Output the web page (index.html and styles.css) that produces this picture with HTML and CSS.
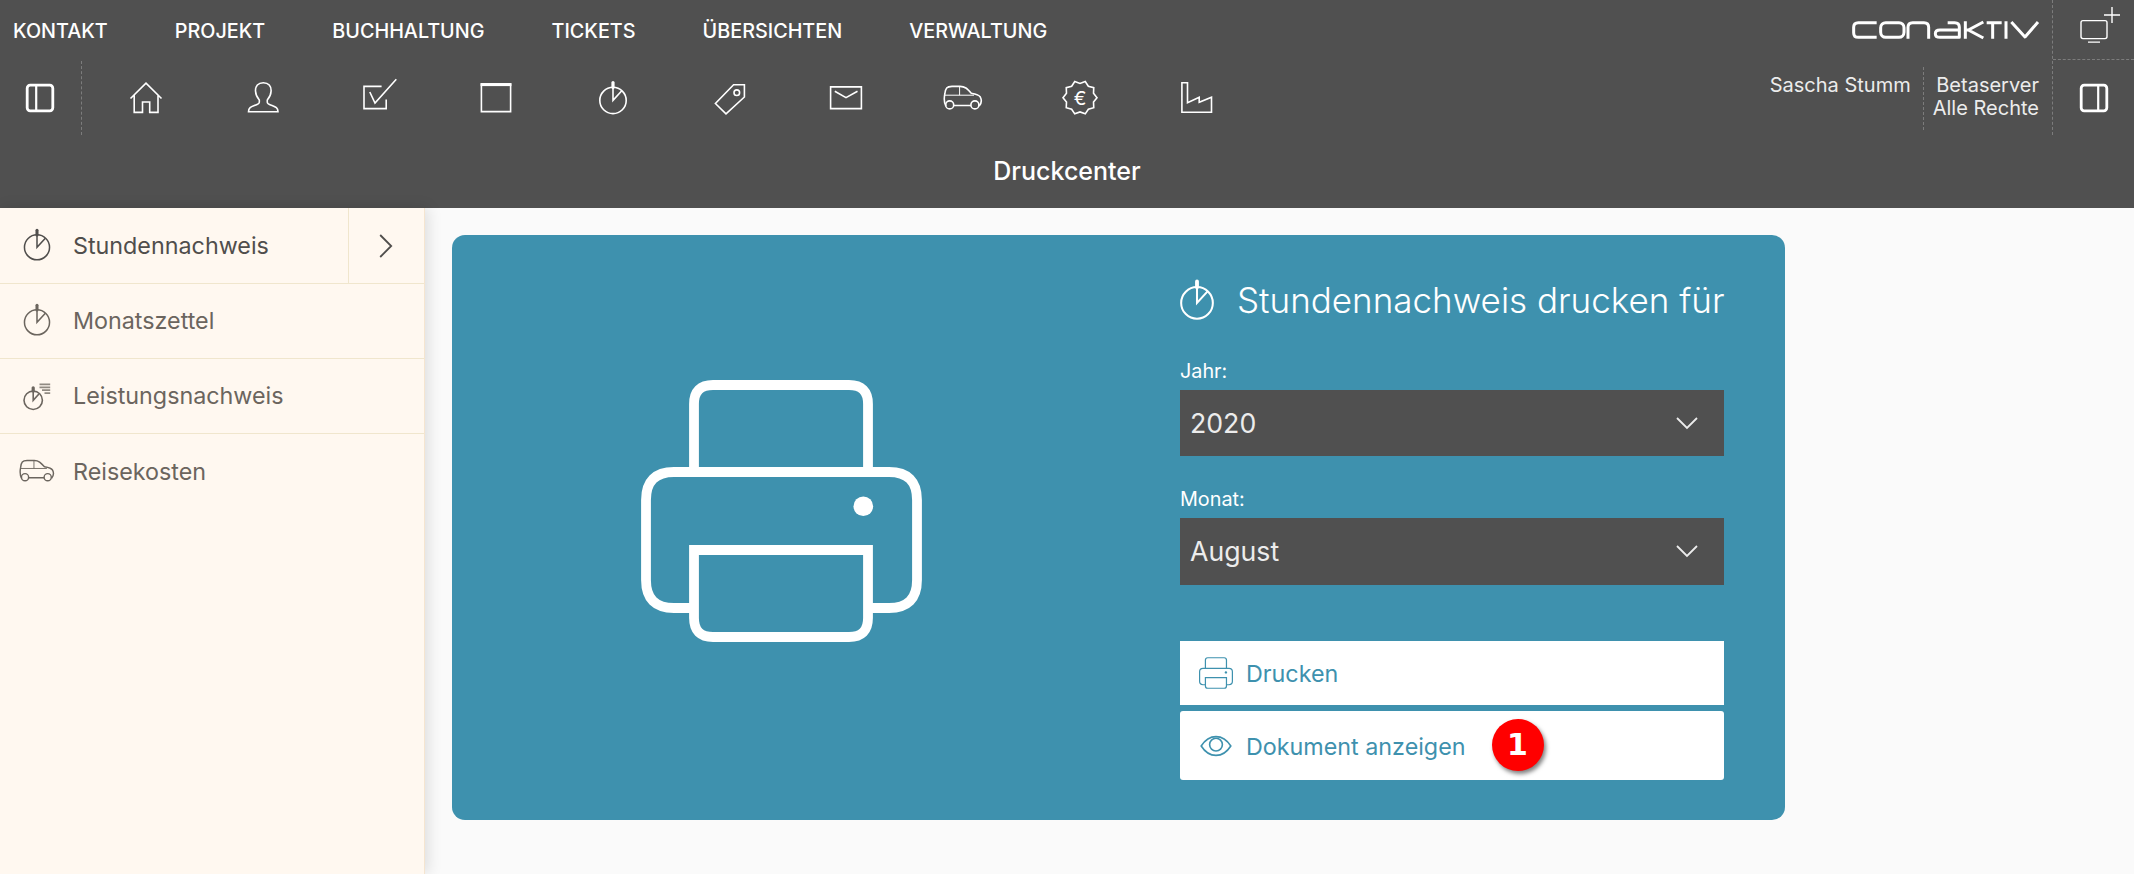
FILE: index.html
```html
<!DOCTYPE html>
<html lang="de">
<head>
<meta charset="utf-8">
<title>Druckcenter</title>
<link rel="stylesheet" href="styles.css">
</head>
<body>
<svg class="defs" aria-hidden="true">
  <symbol id="stopwatch" viewBox="0 0 40 40">
    <circle cx="20" cy="22.4" r="13.2"/>
    <path d="M20 9V22.4L28.8 12.8"/>
    <path class="knob" d="M20 4.6V9.4"/>
  </symbol>
  <symbol id="car" viewBox="0 0 40 40">
    <path d="M2.9 28C1.2 25 1 20 1.8 16C2.6 10 3.6 8.6 9 8.4H17C22 8.4 24 10.5 28.3 15.2C33 16 36 16.6 37.3 19C38.8 22 38.8 25 36.2 28M10.6 27.5H27.9"/>
    <path class="thin" d="M2 17.2H31M16.6 8.5V17.2"/>
    <circle cx="6.7" cy="26.9" r="4"/><circle cx="31.9" cy="26.9" r="4"/>
  </symbol>
  <symbol id="printer" viewBox="0 0 281 262">
    <path d="M53 92V24Q53 5 72 5H208Q227 5 227 24V92"/>
    <path d="M53 228H33Q5 228 5 200V120Q5 92 33 92H248Q276 92 276 120V200Q276 228 248 228H227"/>
    <path d="M53 170H227V238Q227 257 208 257H72Q53 257 53 238Z"/>
    <circle class="lamp" cx="222.3" cy="126.3" r="9.8"/>
  </symbol>
</svg>

<header class="header">
  <div class="header-main">
    <nav class="menu">
      <a>KONTAKT</a><a>PROJEKT</a><a>BUCHHALTUNG</a><a>TICKETS</a><a>ÜBERSICHTEN</a><a>VERWALTUNG</a>
    </nav>
    <div class="toolbar">
      <div class="panel-toggle">
        <svg class="icon bold" viewBox="0 0 40 40"><rect x="7.2" y="7.2" width="25.6" height="25.6" rx="3"/><path class="mid" d="M16.2 7V33"/></svg>
      </div>
      <div class="tools">
        <div class="tool"><svg class="icon" viewBox="0 0 40 40"><path d="M4.5 20.5L20 5.2L35.5 20.5M8.2 17V34.4H16.5V24H23.7V34.4H32V17"/></svg></div>
        <div class="tool"><svg class="icon" viewBox="0 0 40 40"><path d="M20.3 4.7C15 4.7 12.3 8 12.5 13C12.7 17.5 14.5 20 16.3 22C16.5 25 16.3 25.5 14 26.5C9 28.7 5.5 29 5.5 33.7H35C35 29 31.6 28.7 26.5 26.5C24.3 25.5 24.1 25 24.3 22C26.1 20 27.9 17.5 28.1 13C28.3 8 25.6 4.7 20.3 4.7Z"/></svg></div>
        <div class="tool"><svg class="icon" viewBox="0 0 40 40"><path d="M21.6 8.4H4V30.6H26.2V21.4M9.8 14L15 25L36.3 1.2"/></svg></div>
        <div class="tool"><svg class="icon" viewBox="0 0 40 40"><path d="M5.4 6H34.6V33.6H5.4Z"/><path class="lid" d="M4.6 6.6H35.4"/></svg></div>
        <div class="tool"><svg class="icon"><use href="#stopwatch"/></svg></div>
        <div class="tool"><svg class="icon" viewBox="0 0 40 40"><path d="M5.4 25.5L16 35.8L34.4 19V6.8H23.6Z"/><circle cx="26.8" cy="14.7" r="2.8"/></svg></div>
        <div class="tool"><svg class="icon" viewBox="0 0 40 40"><path d="M4.6 8.9H35.4V30.6H4.6ZM8.8 13.2L20 19.7L31.5 13.2"/></svg></div>
        <div class="tool"><svg class="icon"><use href="#car"/></svg></div>
        <div class="tool"><svg class="icon" viewBox="0 0 40 40"><path id="seal" d=""/><text class="euro" x="20" y="26.6">€</text></svg></div>
        <div class="tool"><svg class="icon" viewBox="0 0 40 40"><path d="M4.9 4.7H10.5V24.7L22.2 19.3V24.3L34.5 19.3V34.3H4.9Z"/></svg></div>
      </div>
    </div>
  </div>
  <div class="header-side">
    <svg class="logo" viewBox="0 0 600 120" role="img" aria-label="conaktiv">
      <path d="M95 38H40Q26 38 26 52V68Q26 82 40 82H95"/>
      <rect x="107" y="38" width="70" height="44" rx="15"/>
      <path d="M189 86V52Q189 38 203 38H237Q251 38 251 52V86"/>
      <path d="M308 38H329Q343 38 343 52V82H285Q271 82 271 71Q271 60 285 60H343"/>
      <path d="M361 34V86M415 36L370 60L415 84M361 60H370"/>
      <path d="M425 38H470M443 38V86M483 34V86M499 36L540 81L579 36"/>
    </svg>
    <div class="session">
      <div class="user">Sascha Stumm</div>
      <div class="server">Betaserver<br>Alle Rechte</div>
    </div>
  </div>
  <div class="header-actions">
    <div class="action-new">
      <svg class="icon-new" viewBox="0 0 44 40"><rect x="4" y="15.6" width="26" height="18" rx="2"/><path d="M11 37.1H23M35 2V18M27 10H43"/></svg>
    </div>
    <div class="action-panel">
      <svg class="icon bold" viewBox="0 0 40 40"><rect x="7.2" y="7.2" width="25.6" height="25.6" rx="3"/><path class="mid" d="M24.2 7V33"/></svg>
    </div>
  </div>
  <h1 class="title">Druckcenter</h1>
</header>

<div class="body">
  <aside class="sidebar">
    <div class="item active">
      <svg class="side-icon"><use href="#stopwatch"/></svg><span>Stundennachweis</span>
      <div class="expand"><svg class="chevron-right" viewBox="0 0 14 24"><path d="M1.2 1L12.2 12L1.2 23"/></svg></div>
    </div>
    <div class="item"><svg class="side-icon"><use href="#stopwatch"/></svg><span>Monatszettel</span></div>
    <div class="item">
      <svg class="side-icon" viewBox="0 0 38 38"><circle cx="15.2" cy="24.3" r="9.2"/><path d="M15.2 15V24.3L20.9 18"/><path class="knob" d="M15.2 11.8V15"/><path class="lines" d="M21.5 8.4H32.2M21.5 11.3H32.2M24 14.2H32.2M26.5 17.1H32.2"/></svg><span>Leistungsnachweis</span>
    </div>
    <div class="item"><svg class="side-icon side-car"><use href="#car"/></svg><span>Reisekosten</span></div>
  </aside>

  <main class="content">
    <section class="card">
      <div class="art"><svg class="printer-large"><use href="#printer"/></svg></div>
      <div class="form">
        <h2 class="heading"><svg class="heading-icon"><use href="#stopwatch"/></svg><span>Stundennachweis drucken für</span></h2>
        <div class="label">Jahr:</div>
        <div class="select year"><span>2020</span><svg class="chevron-down" viewBox="0 0 22 12"><path d="M1 1L11 11L21 1"/></svg></div>
        <div class="label">Monat:</div>
        <div class="select month"><span>August</span><svg class="chevron-down" viewBox="0 0 22 12"><path d="M1 1L11 11L21 1"/></svg></div>
        <div class="button print"><svg class="printer-small"><use href="#printer"/></svg><span>Drucken</span></div>
        <div class="button show">
          <svg class="eye" viewBox="0 0 34 24"><path d="M2.2 12C6 6 11 2.6 17 2.6S28 6 31.8 12C28 18 23 21.4 17 21.4S6 18 2.2 12Z"/><circle cx="17" cy="10.6" r="6.4"/></svg><span>Dokument anzeigen</span>
          <div class="badge">1</div>
        </div>
      </div>
    </section>
  </main>
</div>
<script src="seal.js"></script>
</body>
</html>
```
FILE: styles.css
```css
* { box-sizing: border-box; }
body { margin: 0; background: #fafafa; font-family: Inter, sans-serif; color: #fff; }
svg { display: block; fill: none; stroke: currentColor; overflow: visible; flex: none; }
.defs { position: absolute; width: 0; height: 0; }

.header { display: grid; grid-template-columns: 1fr auto 82px; grid-template-rows: 135px 73px; height: 208px; background: #505050; }
.menu { display: flex; gap: 67px; height: 61px; padding: 1px 0 0 13px; font-size: 19.8px; font-weight: 500; line-height: 61px; }
.toolbar { display: flex; height: 74px; }
.panel-toggle { display: flex; align-items: center; width: 82px; padding-left: 20px; border-right: 1px dashed #7c7c7c; }
.tools { display: flex; padding-left: 6px; }
.tool { display: flex; align-items: center; justify-content: center; width: 116.7px; }
.icon { width: 40px; height: 40px; stroke-width: 1.6; }
.knob { stroke-width: 3.2; stroke-linecap: round; }
.lid { stroke-width: 3; }
.thin { stroke-width: 1; }
.bold { stroke-width: 2.8; }
.mid { stroke-width: 2.2; }
.euro { fill: currentColor; stroke: none; font-size: 19px; font-weight: 400; text-anchor: middle; }

.header-side { display: flex; flex-direction: column; align-items: flex-end; }
.logo { width: 200px; height: 40px; margin: 10px 7px 17px 0; stroke-width: 9; stroke-linejoin: round; }
.session { display: flex; font-size: 20px; font-weight: 400; line-height: 23px; height: 63px; color: #ececec; }
.user { padding: 7px 12px 0 0; border-right: 1px dashed #7c7c7c; }
.server { padding: 7px 13px 0 9px; text-align: right; }
.header-actions { border-left: 1px dashed #7c7c7c; }
.action-new { height: 60px; padding: 5px 0 0 24px; border-bottom: 1px dashed #7c7c7c; }
.icon-new { width: 44px; height: 40px; stroke-width: 1.4; }
.action-panel { display: flex; align-items: center; justify-content: center; height: 76px; }
.title { grid-column: 1 / -1; margin: 0; font-size: 25px; font-weight: 500; line-height: 73px; text-align: center; }

.body { display: flex; height: 666px; }
.sidebar { width: 425px; background: #fff8f0; color: #6b655e; border-right: 1px solid #f5e5d0; box-shadow: 3px 0 14px rgba(0, 0, 0, .12); }
.item { display: flex; align-items: center; height: 75px; padding: 0 0 1px 18px; border-bottom: 1px solid #f0e6cd; font-size: 23.3px; font-weight: 400; }
.item:last-child { border-bottom: 0; }
.item span { margin-left: 17px; }
.active { height: 76px; color: #504e4c; padding-bottom: 0; }
.side-icon { width: 38px; height: 38px; margin-top: -1px; stroke-width: 1.6; }
.side-car { width: 36px; height: 36px; margin: 0 1px 0 1px; }
.lines { stroke-width: 1.7; opacity: .75; }
.expand { display: flex; align-items: center; justify-content: center; width: 76px; height: 75px; margin-left: auto; padding-right: 1px; border-left: 1px solid #f0e6cd; }
.chevron-right { width: 14px; height: 24px; stroke-width: 1.8; }

.content { padding: 27px 0 0 27px; }
.card { display: flex; width: 1333px; height: 585px; background: #3e91ae; border-radius: 13px; }
.art { width: 728px; padding: 145px 0 0 188.5px; }
.printer-large { width: 281px; height: 262px; stroke-width: 9.8; }
.lamp { fill: currentColor; stroke: none; }
.form { width: 544px; }
.heading { display: flex; align-items: center; height: 66px; margin: 32px 0 23px; font-size: 35px; font-weight: 300; white-space: nowrap; }
.heading-icon { width: 48px; height: 48px; margin: -1px 16px 0 -7px; stroke-width: 1.7; }
.heading .knob { stroke-width: 3; }
.label { height: 34px; padding-top: 3px; font-size: 19.8px; font-weight: 400; line-height: 24px; }
.select { display: flex; align-items: center; justify-content: space-between; padding: 0 26px 1px 10px; background: #505050; color: #ececec; font-size: 26.7px; font-weight: 400; }
.year { height: 66px; margin-bottom: 28px; }
.month { height: 67px; margin-bottom: 56px; }
.chevron-down { width: 22px; height: 12px; stroke-width: 1.8; }
.button { display: flex; align-items: center; background: #fff; color: #3e91ae; font-size: 23.3px; font-weight: 400; }
.print { height: 64px; margin-bottom: 6px; padding-left: 19px; }
.printer-small { width: 34px; height: 32px; margin-right: 13px; stroke-width: 10; }
.show { height: 69px; padding: 1px 0 0 19px; border-radius: 3px; }
.eye { width: 34px; height: 24px; margin-right: 13px; stroke-width: 1.6; }
.badge { width: 52px; height: 52px; margin: -3px 0 0 26px; border-radius: 50%; background: #f00; color: #fff; box-shadow: 2px 3px 4px rgba(0, 0, 0, .5); font: bold 30px/52px "DejaVu Sans", sans-serif; text-align: center; }
```
FILE: seal.js
```js
// Jagged outline of the price seal: ten tips around the centre.
const points = [];
for (let i = 0; i < 20; i++) {
  const angle = i * Math.PI / 10;
  const radius = i % 2 ? 14.2 : 17;
  points.push((20 + radius * Math.cos(angle)).toFixed(2) + " " + (19.7 + radius * Math.sin(angle)).toFixed(2));
}
document.getElementById("seal").setAttribute("d", "M" + points.join("L") + "Z");
```
